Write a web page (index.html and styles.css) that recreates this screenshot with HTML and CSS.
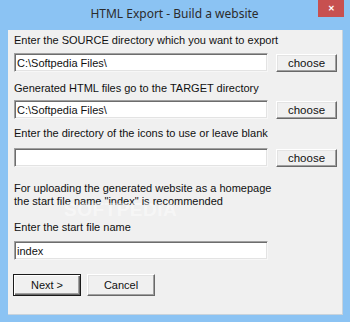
FILE: index.html
```html
<!DOCTYPE html>
<html>
<head>
<meta charset="utf-8">
<link rel="stylesheet" href="styles.css">
</head>
<body>
<div class="window">
  <div class="titlebar">
    <div class="title">HTML Export - Build a website</div>
    <div class="close">&#x2715;</div>
  </div>
  <div class="client">
    <div class="label l1">Enter the SOURCE directory which you want to export</div>
    <div class="row r1">
      <div class="input">C:\Softpedia Files\</div>
      <div class="btn choose">choose</div>
    </div>
    <div class="label l2">Generated HTML files go to the TARGET directory</div>
    <div class="row r2">
      <div class="input">C:\Softpedia Files\</div>
      <div class="btn choose">choose</div>
    </div>
    <div class="label l3">Enter the directory of the icons to use or leave blank</div>
    <div class="row r3">
      <div class="input"></div>
      <div class="btn choose">choose</div>
    </div>
    <div class="para">For uploading the generated website as a homepage<br>the start file name "index" is recommended</div>
    <div class="label l4">Enter the start file name</div>
    <div class="row r4">
      <div class="input">index</div>
    </div>
    <div class="actions">
      <div class="btn big default">Next &gt;</div>
      <div class="btn big">Cancel</div>
    </div>
    <div class="watermark">SOFTPEDIA</div>
  </div>
</div>
</body>
</html>
```

FILE: styles.css
```css
html, body {
  margin: 0;
  padding: 0;
}
body {
  width: 350px;
  height: 322px;
  overflow: hidden;
  background: #8bc3f3;
  font-family: "Liberation Sans", Arial, sans-serif;
}
.window {
  display: flex;
  flex-direction: column;
  width: 350px;
  height: 322px;
}
.titlebar {
  position: relative;
  height: 30px;
  display: flex;
  justify-content: center;
}
.title {
  font-family: "Noto Sans", "Open Sans", sans-serif;
  font-size: 12px;
  color: #2b2b2b;
  line-height: 27px;
  padding-right: 1px;
}
.close {
  position: absolute;
  left: 318px;
  top: 0;
  width: 26px;
  height: 17px;
  background: #c75050;
  color: #fff;
  font-size: 8px;
  font-weight: bold;
  line-height: 17px;
  text-align: center;
}
.client {
  position: relative;
  margin: 0 7px 7px 8px;
  flex: 1;
  background: #f0f0f0;
  box-shadow: inset -1px -1px 0 #c8d3dc;
  padding: 3px 0 0 6px;
  display: flex;
  flex-direction: column;
  align-items: flex-start;
  font-size: 11px;
  color: #111;
}
.label {
  line-height: 14px;
  height: 14px;
  white-space: nowrap;
}
.row {
  display: flex;
  align-items: flex-start;
  gap: 8px;
}
.input {
  box-sizing: border-box;
  width: 254px;
  height: 19px;
  background: #fff;
  border-top: 1px solid #a0a0a0;
  border-left: 1px solid #a0a0a0;
  border-right: 1px solid #f7f7f7;
  border-bottom: 1px solid #f7f7f7;
  box-shadow: inset 1px 1px 0 #6d6d6d, inset -1px -1px 0 #e3e3e3;
  padding: 2px 0 0 2px;
  line-height: 14px;
  white-space: nowrap;
}
.btn {
  box-sizing: border-box;
  background: #f0f0f0;
  border-top: 1px solid #ffffff;
  border-left: 1px solid #ffffff;
  border-right: 1px solid #696969;
  border-bottom: 1px solid #696969;
  box-shadow: inset -1px -1px 0 #a0a0a0, inset 1px 1px 0 #e3e3e3;
  text-align: center;
}
.choose {
  width: 61px;
  height: 18px;
  line-height: 16px;
  margin-top: 1px;
  font-size: 11.5px;
}
.l1 { margin-top: 0; }
.r1 { margin-top: 6px; }
.l2 { margin-top: 9px; }
.r2 { margin-top: 5px; }
.l3 { margin-top: 7px; }
.r3 { margin-top: 8px; }
.para {
  margin-top: 15px;
  line-height: 12.5px;
  white-space: nowrap;
}
.l4 { margin-top: 13px; }
.r4 { margin-top: 7px; }
.actions {
  margin-top: 14px;
  margin-left: -1px;
  display: flex;
  gap: 6px;
}
.big {
  width: 68px;
  height: 22px;
  line-height: 20px;
}
.default {
  border: 1px solid #1a1a1a;
  box-shadow: inset 1px 1px 0 #ffffff, inset -1px -1px 0 #696969, inset -2px -2px 0 #a0a0a0;
}
.watermark {
  position: absolute;
  left: 56px;
  top: 169px;
  font-size: 19px;
  font-weight: bold;
  letter-spacing: 0.5px;
  color: rgba(255, 255, 255, 0.45);
  pointer-events: none;
}
```
